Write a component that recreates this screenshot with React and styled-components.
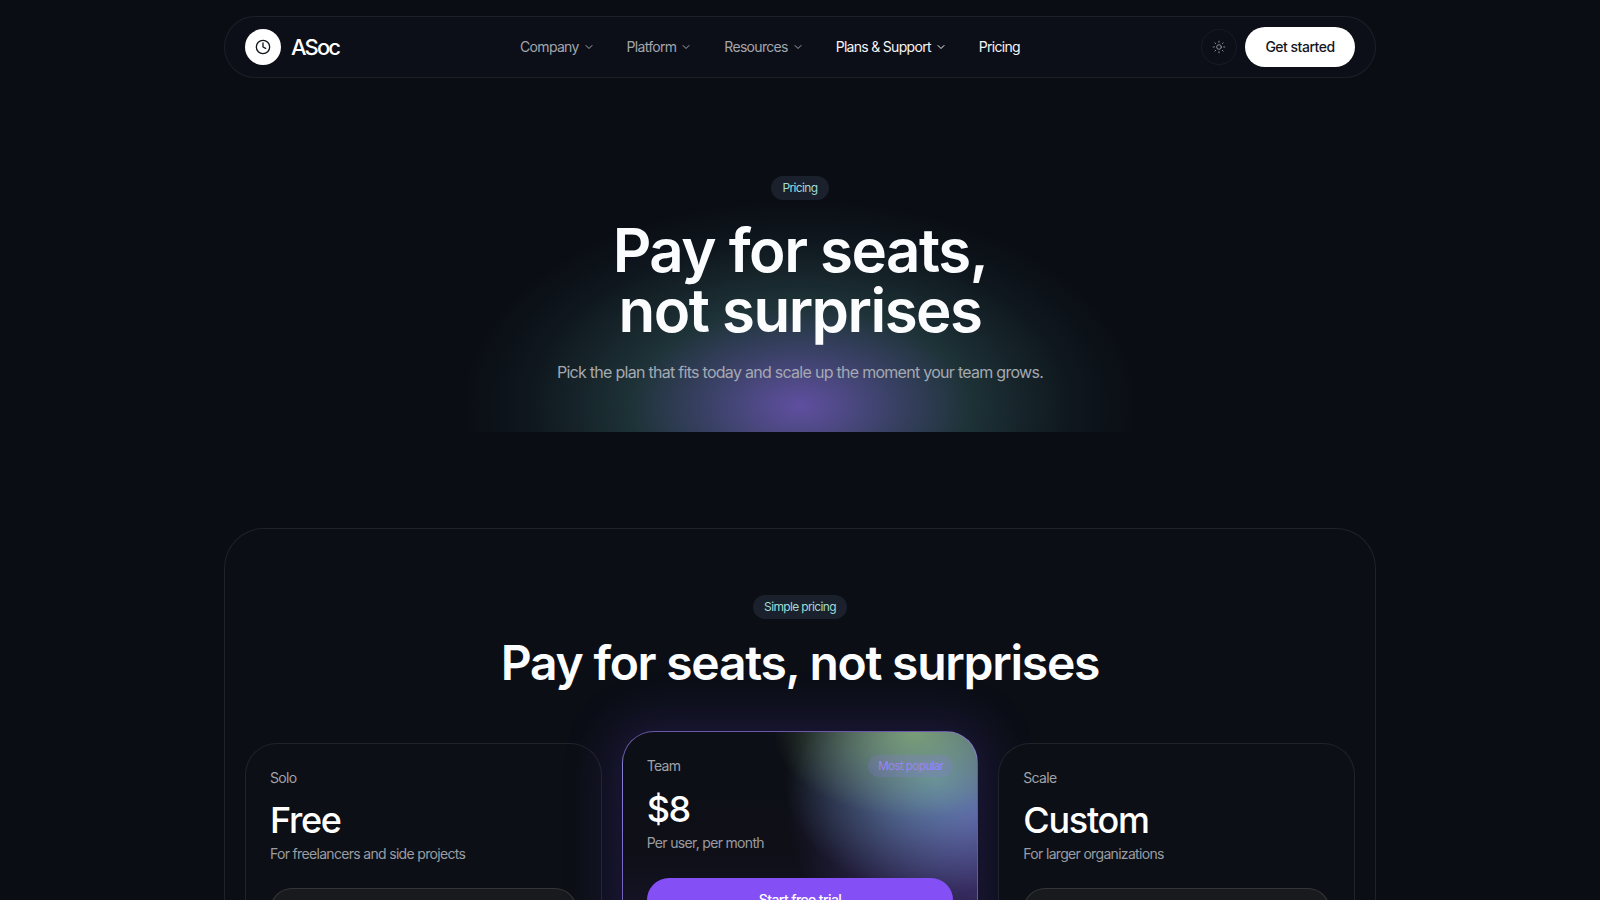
import React from "react";
import styled, { createGlobalStyle } from "styled-components";
import { ChevronDown, Sun, Clock } from "lucide-react";

const Global = createGlobalStyle`
  html, body { margin: 0; padding: 0; background: #0a0d14; }
  body { font-family: Inter, "Liberation Sans", sans-serif; color: #fff; overflow-x: hidden; }
  * { box-sizing: border-box; }
`;
const Page = styled.div`width: 1152px; margin: 0 auto; padding-top: 16px;`;
const Nav = styled.header`
  height: 62px; border: 1px solid rgba(255,255,255,.075); border-radius: 31px;
  background: #0c0f17; padding: 0 20px; display: flex; justify-content: space-between; align-items: center;
`;
const Brand = styled.div`display: flex; align-items: center; gap: 10px;`;
const LogoMark = styled.div`
  width: 36px; height: 36px; border-radius: 50%; background: #fff; color: #12141c;
  display: flex; align-items: center; justify-content: center;
`;
const BrandName = styled.span`font-size: 22px; font-weight: 500; letter-spacing: -1.9px;`;
const Menu = styled.nav`display: flex; align-items: center; gap: 32px;`;
const MenuItem = styled.a`
  display: flex; align-items: center; gap: 4px; font-size: 14px; letter-spacing: -.7px; padding-bottom: 1px;
  color: ${p => (p.$bright ? "#f4f5f7" : "#a3a6ad")};
`;
const Actions = styled.div`display: flex; align-items: center; gap: 8px;`;
const ThemeBtn = styled.div`
  width: 36px; height: 36px; border-radius: 50%; border: 1px solid rgba(255,255,255,.05);
  display: flex; align-items: center; justify-content: center; color: #9a9da5;
`;
const Cta = styled.button`
  height: 40px; width: 110px; border: 0; border-radius: 20px; background: #fff; color: #14161d; padding: 0 0 2px;
  font: 500 14px Inter, sans-serif; letter-spacing: -.5px;
`;
const Hero = styled.section`
  position: relative; height: 354px; display: flex; flex-direction: column; align-items: center;
  padding-top: 98px; overflow: hidden;
`;
const Glow = styled.div`
  position: absolute; left: 200px; right: 200px; bottom: 0; height: 260px;
  background:
    radial-gradient(ellipse 170px 100px at 50% 90%, rgba(118,84,196,.72), rgba(104,80,180,.34) 55%, transparent 100%),
    radial-gradient(ellipse 338px 205px at 50% 90%, rgba(52,92,92,.66), rgba(46,82,84,.54) 50%, rgba(30,52,60,.26) 80%, transparent 100%);
`;
const Pill = styled.span`
  position: relative; height: 24px; padding: 0 11.5px 2px; border-radius: 12px; background: #1a212c;
  color: #9fdcd8; font-size: 12px; letter-spacing: -.65px; display: inline-flex; align-items: center;
`;
const HeroTitle = styled.h1`
  position: relative; margin: 20px 0 0; font-size: 60px; line-height: 60px; font-weight: 600;
  letter-spacing: -1.5px; text-align: center; color: #fbfcfd;
`;
const HeroSub = styled.p`
  position: relative; margin: 20px 0 0; font-size: 16px; line-height: 24px; letter-spacing: -.72px; color: #a5a9b2;
`;
const Panel = styled.section`
  margin-top: 96px; height: 700px; border: 1px solid rgba(255,255,255,.085); border-radius: 40px;
  background: #0b0e15; padding: 66px 20px 0; display: flex; flex-direction: column; align-items: center;
`;
const PanelTitle = styled.h2`
  margin: 16px 0 0; font-size: 48px; line-height: 56px; font-weight: 600; letter-spacing: -1.26px; color: #fcfdfe;
`;
const Cards = styled.div`
  width: 100%; margin-top: 40px; display: grid; grid-template-columns: repeat(3, 1fr); gap: 20px; align-items: start;
`;
const Card = styled.article`
  position: relative; overflow: hidden; height: 400px; margin-top: 12px; border: 1px solid rgba(255,255,255,.085);
  border-radius: 32px; background: #0c0f15; padding: 24px 24px 0;
`;
const Halo = styled.div`
  position: relative; border-radius: 32px;
  box-shadow: 0 0 46px 16px rgba(90,60,190,.2);
`;
const FeaturedCard = styled(Card)`
  margin-top: 0; padding-top: 23px; border-color: rgba(150,125,240,.65);
  background:
    radial-gradient(ellipse 140px 85px at 82% 0%, rgba(135,175,120,.8), rgba(135,175,120,.3) 60%, transparent 100%),
    radial-gradient(ellipse 150px 115px at 88% 12%, rgba(105,165,185,.72), rgba(105,165,185,.3) 55%, transparent 100%),
    radial-gradient(ellipse 190px 160px at 100% 20%, rgba(125,95,225,.65), rgba(125,95,225,.25) 60%, transparent 100%),
    linear-gradient(#0c0f15 0, #0e0f17 30%, #1b1630 55%);
`;
const CardHead = styled.div`display: flex; justify-content: space-between; align-items: center; height: 22px;`;
const Tier = styled.span`display: block; font-size: 14px; line-height: 20px; letter-spacing: -.7px; color: #a0a2a8;`;
const Badge = styled.span`
  height: 22px; width: 85px; justify-content: center; border-radius: 11px; background: rgba(140,120,240,.2);
  color: #9a84f5; font-size: 11.5px; letter-spacing: -.55px; display: inline-flex; align-items: center;
`;
const Price = styled.div`margin-top: 12px; font-size: 36px; line-height: 40px; font-weight: 500; letter-spacing: -1.3px;`;
const Desc = styled.p`margin: 4px 0 0; font-size: 14px; line-height: 20px; letter-spacing: -.68px; color: #9a9ca3;`;
const PlanBtn = styled.button`
  width: 100%; height: 44px; margin-top: ${p => (p.$primary ? 25 : 24)}px; border-radius: 22px; font: 500 14px Inter, sans-serif; letter-spacing: -.6px; color: #fff;
  padding: 0 0 2px;
  border: ${p => (p.$primary ? "0" : "1px solid rgba(255,255,255,.12)")};
  background: ${p => (p.$primary ? "#8450f6" : "#191a1e")};
`;

const menu = [["Company", 1], ["Platform", 1], ["Resources", 1], ["Plans & Support", 1, 1], ["Pricing", 0, 1]];

export default function App() {
  return (
    <>
      <Global />
      <Page>
        <Nav>
          <Brand>
            <LogoMark><Clock size={16} strokeWidth={2} /></LogoMark>
            <BrandName>ASoc</BrandName>
          </Brand>
          <Menu>
            {menu.map(([label, chev, bright]) => (
              <MenuItem key={label} $bright={bright}>
                {label}{chev ? <ChevronDown size={12} /> : null}
              </MenuItem>
            ))}
          </Menu>
          <Actions>
            <ThemeBtn><Sun size={14} strokeWidth={1.5} /></ThemeBtn>
            <Cta>Get started</Cta>
          </Actions>
        </Nav>
        <Hero>
          <Glow />
          <Pill>Pricing</Pill>
          <HeroTitle>Pay for seats,<br />not surprises</HeroTitle>
          <HeroSub>Pick the plan that fits today and scale up the moment your team grows.</HeroSub>
        </Hero>
        <Panel>
          <Pill>Simple pricing</Pill>
          <PanelTitle>Pay for seats, not surprises</PanelTitle>
          <Cards>
            <Card>
              <Tier>Solo</Tier>
              <Price>Free</Price>
              <Desc>For freelancers and side projects</Desc>
              <PlanBtn>Start for free</PlanBtn>
            </Card>
            <Halo>
              <FeaturedCard>
                <CardHead><Tier>Team</Tier><Badge>Most popular</Badge></CardHead>
                <Price>$8</Price>
                <Desc>Per user, per month</Desc>
                <PlanBtn $primary>Start free trial</PlanBtn>
              </FeaturedCard>
            </Halo>
            <Card>
              <Tier>Scale</Tier>
              <Price>Custom</Price>
              <Desc>For larger organizations</Desc>
              <PlanBtn>Talk to sales</PlanBtn>
            </Card>
          </Cards>
        </Panel>
      </Page>
    </>
  );
}
